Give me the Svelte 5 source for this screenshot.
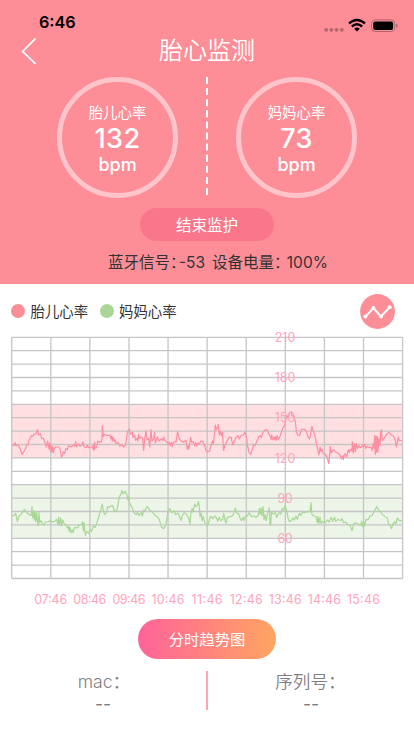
<script lang="ts">
	const gauges = [
		{ name: '胎儿心率', value: 132 },
		{ name: '妈妈心率', value: 73 }
	];

	const times = ['07:46', '08:46', '09:46', '10:46', '11:46', '12:46', '13:46', '14:46', '15:46'];
	const levels = [210, 180, 150, 120, 90, 60];

	const left = 11.7;
	const top = 7.3;
	const col = 39.09;
	const row = 13.4;
	const cols = Array.from({ length: 11 }, (_, i) => left + i * col);
	const rows = Array.from({ length: 19 }, (_, i) => top + i * row);

	// traces are sampled at three units per pixel
	const fetal =
		'37,150 42,152 45,143 48,152 54,150 60,160 66,178 70,172 75,165 80,150 84,150 88,134 94,122 98,124 102,118 108,116 112,104 116,120 121,116 125,130 130,130 136,146 139,156 143,138 147,162 149,144 151,168 153,152 156,172 158,154 160,172 163,160 168,156 176,156 180,162 185,187 190,170 194,176 198,160 202,164 206,152 212,156 220,150 225,154 227,140 230,156 236,146 240,154 246,150 249,140 252,155 258,158 262,150 266,158 276,156 279,162 280,148 282,166 284,142 286,160 290,158 293,138 298,142 304,140 306,132 307,92 310,124 314,118 320,122 330,120 332,132 335,124 337,138 340,126 342,140 345,134 348,146 354,142 360,154 366,148 370,156 376,152 380,130 382,110 388,102 391,118 397,112 399,128 404,120 407,136 411,130 414,138 ' +
		'416,118 418,130 423,126 428,130 431,166 434,134 438,108 441,134 446,130 449,156 453,104 456,138 461,132 464,112 466,144 472,126 477,138 484,132 488,136 491,126 494,136 500,140 505,148 508,142 510,152 514,142 517,156 520,142 528,140 533,110 538,132 544,138 550,142 558,136 562,164 564,152 567,162 572,126 575,142 580,140 584,152 587,142 590,154 594,144 598,148 603,138 610,142 614,150 617,164 622,172 629,168 635,144 638,138 640,148 643,120 646,90 649,104 653,98 655,88 658,120 661,108 664,122 667,112 671,166 675,150 682,136 688,126 694,128 698,150 702,140 709,126 714,122 718,132 723,122 730,120 735,112 739,124 742,150 747,172 752,178 757,162 761,148 765,152 771,138 776,126 781,122 784,128 789,112 794,106 801,104 806,116 811,124 ' +
		'813,134 815,120 818,134 822,126 824,134 827,124 829,136 832,122 835,134 841,122 845,110 850,96 855,90 858,68 861,60 864,70 868,54 874,50 876,62 882,64 886,80 889,110 893,120 899,122 904,104 912,102 919,108 924,126 929,132 933,110 936,94 940,110 944,118 949,144 953,162 957,180 960,156 963,170 966,162 970,176 976,178 982,188 986,206 988,190 991,154 994,174 1000,164 1006,170 1013,174 1020,180 1024,192 1028,182 1030,194 1033,180 1036,176 1040,186 1045,164 1048,172 1052,162 1056,168 1057,140 1060,174 1063,146 1066,170 1069,146 1072,160 1077,152 1082,158 1088,150 1091,156 1095,148 1097,160 1102,154 1107,158 1113,156 1116,166 1120,146 1122,160 1124,122 1126,178 1128,124 1130,172 1132,124 1134,170 1137,130 1140,152 1142,116 1144,104 1147,136 1152,130 1160,118 1167,112 1174,120 1181,124 1186,138 1189,156 1193,136 1195,126 1198,138 1206,136';
	const mother =
		'36,108 42,106 47,100 52,124 57,108 62,104 67,98 73,88 78,94 83,100 88,104 94,106 96,80 98,114 101,92 103,120 105,96 107,124 110,98 112,122 114,138 117,98 119,128 123,122 127,132 132,136 136,126 144,126 150,122 157,126 164,124 170,118 174,134 176,112 179,136 182,114 185,138 188,120 192,130 198,136 202,144 206,138 207,154 210,142 213,158 217,150 219,158 224,142 232,144 237,136 245,132 248,126 250,152 252,128 256,166 260,154 266,160 270,148 275,154 280,138 286,142 292,124 298,104 304,84 307,72 310,94 315,104 320,96 323,80 328,82 336,76 340,82 343,94 350,92 354,74 357,52 362,44 366,32 370,42 376,34 380,42 384,60 386,50 389,70 396,82 402,98 408,104 412,98 417,106 424,98 ' +
		'427,108 431,90 436,92 440,80 446,84 450,92 456,94 460,100 468,108 474,112 479,122 485,142 491,146 497,136 500,118 505,90 510,86 514,98 522,92 526,104 534,100 538,108 543,122 547,106 553,98 560,104 566,114 570,132 573,96 576,86 579,96 584,72 588,80 592,76 595,64 598,78 600,110 604,100 606,122 610,110 614,128 622,138 628,120 632,108 638,116 644,108 650,114 653,124 658,112 662,122 668,118 671,100 675,120 678,130 682,112 690,110 696,108 700,104 706,84 710,98 716,102 720,114 724,122 729,112 732,122 736,110 742,108 748,98 754,110 762,108 768,112 774,108 778,86 780,104 783,84 786,108 789,80 792,120 795,104 799,122 803,98 808,84 810,132 ' +
		'812,136 814,96 820,102 826,98 830,112 834,104 838,98 843,102 846,86 851,90 854,78 858,84 861,98 866,122 872,124 878,114 883,120 888,108 892,118 898,100 902,106 908,96 914,98 924,94 930,96 933,68 936,104 943,108 948,110 952,128 954,110 957,130 960,112 963,130 967,124 976,128 982,120 988,126 993,112 998,124 1004,112 1007,124 1014,118 1022,122 1026,116 1031,128 1037,126 1044,134 1050,136 1056,152 1061,132 1066,128 1074,132 1082,136 1085,124 1088,140 1091,124 1094,138 1098,118 1104,120 1110,108 1117,106 1123,94 1130,80 1136,90 1142,96 1148,104 1155,110 1162,114 1166,132 1170,134 1174,146 1179,132 1184,126 1188,130 1192,114 1198,122 1207,122';
</script>

<main>
	<header>
		<div class="status">
			<span class="clock">6:46</span>
			<svg width="76" height="16" viewBox="0 0 76 16">
				<g fill="#b2656b">
					<circle cx="3.2" cy="11.8" r="1.9" />
					<circle cx="8.4" cy="11.8" r="1.9" />
					<circle cx="13.6" cy="11.8" r="1.9" />
					<circle cx="18.8" cy="11.8" r="1.9" />
				</g>
				<g fill="none" stroke="#000" stroke-width="2.4">
					<path d="M26 5.4Q34 -1.6 42 5.4" />
					<path d="M28.8 8.5Q34 4 39.2 8.5" />
				</g>
				<path d="M31.2 10.7Q34 8.5 36.8 10.7L34 13.5Z" />
				<rect x="48.5" y="1.9" width="23.2" height="11.6" rx="3.6" fill="none" stroke="#b2656b" />
				<rect x="50.2" y="3.5" width="19.9" height="8.4" rx="2" />
				<path d="M73 5.6Q74.7 6.2 74.7 7.7T73 9.8Z" fill="#b2656b" />
			</svg>
		</div>

		<nav>
			<svg class="back" width="16" height="28" viewBox="0 0 16 28">
				<path d="M14.6 1.4L1.6 14.4L14.6 26.8" fill="none" stroke="#fff" stroke-width="1.7" />
			</svg>
			<h1>胎心监测</h1>
		</nav>

		<div class="gauges">
			{#each gauges as gauge, i}
				{#if i > 0}
					<svg class="dash" width="2" height="119">
						<line x1="1" x2="1" y1="0" y2="119" />
					</svg>
				{/if}
				<div class="gauge">
					<span class="name">{gauge.name}</span>
					<strong>{gauge.value}</strong>
					<span class="unit">bpm</span>
				</div>
			{/each}
		</div>

		<button class="stop">结束监护</button>
		<p class="device">
			<span>蓝牙信号<i>：</i>-53</span>
			<span>设备电量<i class="wide">：</i>100%</span>
		</p>
	</header>

	<div class="legend">
		<span class="dot"></span>
		<span class="key">胎儿心率</span>
		<span class="dot green"></span>
		<span class="key">妈妈心率</span>
		<svg class="trend" width="35" height="35" viewBox="0 0 35 35">
			<circle cx="17.5" cy="17.5" r="17.4" fill="#fd8e98" />
			<path d="M5.4 22.6L13.4 14L21 22.4L29.6 13.2" fill="none" stroke="#fff" stroke-width="2" />
			<g fill="#fff">
				<circle cx="5.4" cy="22.6" r="2" />
				<circle cx="13.4" cy="14" r="1.9" />
				<circle cx="21" cy="22.4" r="1.9" />
				<circle cx="29.6" cy="13.2" r="2" />
			</g>
		</svg>
	</div>

	<svg class="chart" width="414" height="280" viewBox="0 0 414 280">
		<rect x={left} y={rows[5]} width={col * 10} height={row * 4} fill="#ffdfe1" />
		<rect x={left} y={rows[11]} width={col * 10} height={row * 4} fill="#ecf5e8" />
		<g class="grid">
			{#each rows as y}
				<line x1={left} x2={left + col * 10} y1={y} y2={y} />
			{/each}
			{#each cols as x}
				<line x1={x} x2={x} y1={top} y2={top + row * 18} />
			{/each}
		</g>
		<polyline class="trace" points={fetal} transform="translate(0 65) scale(0.33333)" stroke="#fd8fa2" />
		<polyline class="trace" points={mother} transform="translate(0 150) scale(0.33333)" stroke="#a9d796" />
		<g class="labels">
			{#each levels as level, i}
				<text x={285} y={12 + i * row * 3} textLength={level > 99 ? 20.5 : 15}>{level}</text>
			{/each}
			{#each times as time, i}
				<text x={50.7 + i * col} y="274.4" textLength={time === '11:46' ? 31 : 33}>{time}</text>
			{/each}
		</g>
	</svg>

	<button class="hourly">分时趋势图</button>

	<footer>
		<div class="info">
			<span class="mac">mac<i>：</i></span>
			<span class="val">--</span>
		</div>
		<div class="divider"></div>
		<div class="info">
			<span class="serial">序列号<i>：</i></span>
			<span class="val">--</span>
		</div>
	</footer>
</main>

<style>
	:global(body) {
		background: #fff;
	}

	main {
		width: 414px;
		height: 736px;
		overflow: hidden;
		display: flex;
		flex-direction: column;
		font-family: Inter, 'Noto Sans CJK SC', sans-serif;
		color: #333;
	}

	header {
		height: 284px;
		flex: none;
		background: #fd8e98;
		display: flex;
		flex-direction: column;
		align-items: center;
	}

	.status {
		width: 100%;
		height: 34px;
		box-sizing: border-box;
		padding: 11px 15px 0 39px;
		display: flex;
		justify-content: space-between;
	}

	.status svg {
		margin-top: 7px;
	}

	.clock {
		font-size: 16.2px;
		font-weight: 600;
		line-height: 23px;
		color: #000;
	}

	nav {
		width: 100%;
		height: 34px;
		display: grid;
		grid-template-columns: 60px 1fr 60px;
		align-items: center;
	}

	.back {
		margin-left: 21px;
	}

	h1 {
		margin: 0;
		text-align: center;
		font-size: 24px;
		line-height: 34px;
		font-weight: 350;
		color: #fff;
	}

	.gauges {
		display: flex;
		margin-top: 9px;
		gap: 28px;
	}

	.gauge {
		width: 121px;
		height: 121px;
		box-sizing: border-box;
		border: 5.5px solid #ffc5cb;
		border-radius: 50%;
		display: flex;
		flex-direction: column;
		align-items: center;
		color: #fff;
	}

	.name {
		margin-top: 20px;
		font-size: 14.4px;
		line-height: 21px;
	}

	.gauge strong {
		font-size: 27px;
		font-weight: 550;
		line-height: 32px;
		letter-spacing: 0.4px;
	}

	.unit {
		font-size: 18px;
		font-weight: 550;
		line-height: 20px;
	}

	.dash line {
		stroke: #fff;
		stroke-width: 2;
		stroke-dasharray: 7 4.1;
	}

	button {
		border: 0;
		padding: 0;
		font-family: inherit;
		color: #fff;
	}

	.stop {
		margin-top: 10px;
		width: 134px;
		height: 33px;
		padding-bottom: 2px;
		border-radius: 17px;
		background: #fa778b;
		font-size: 15.5px;
	}

	.device {
		display: flex;
		gap: 7px;
		margin: 11px 0 0 22px;
		font-size: 15.5px;
		line-height: 22px;
		white-space: nowrap;
	}

	/* half-width colons */
	i {
		font-style: normal;
		font-feature-settings: 'halt';
	}

	.device i {
		margin-right: 1px;
	}

	.device i.wide {
		margin-right: 5px;
	}

	.legend {
		display: flex;
		align-items: center;
		height: 46px;
		flex: none;
		padding: 0 20px 0 11px;
	}

	.dot {
		width: 14px;
		height: 14px;
		margin: 8px 5.5px 0 0;
		border-radius: 50%;
		background: #fd8e98;
	}

	.green {
		margin-left: 11.5px;
		background: #abd698;
	}

	.key {
		margin-top: 9px;
		font-size: 14.4px;
		line-height: 20px;
	}

	.trend {
		margin: 8px -1px 0 auto;
	}

	.chart {
		flex: none;
	}

	.grid {
		stroke: #c5c5c5;
		stroke-width: 1.3;
	}

	.trace {
		fill: none;
		stroke-width: 3.6;
		stroke-linejoin: round;
	}

	.labels {
		font-size: 12.4px;
		fill: #ffa5bd;
		text-anchor: middle;
	}

	.hourly {
		flex: none;
		align-self: center;
		margin-top: 9px;
		width: 138px;
		height: 40px;
		padding-bottom: 2px;
		border-radius: 20px;
		background: linear-gradient(90deg, #ff6399, #ffa562);
		font-size: 15.3px;
	}

	footer {
		display: flex;
		margin-top: 12px;
	}

	.info {
		flex: 1;
		display: flex;
		flex-direction: column;
		align-items: center;
		font-size: 17.6px;
		font-weight: 350;
		line-height: 22px;
		color: #808080;
	}

	/* the labels sit left of centre, over the dashes */
	.mac {
		margin-right: 7px;
	}

	.serial {
		margin-right: 10px;
	}

	.val {
		font-weight: 400;
	}

	.divider {
		width: 2px;
		height: 39px;
		background: #ffa5b3;
	}
</style>
